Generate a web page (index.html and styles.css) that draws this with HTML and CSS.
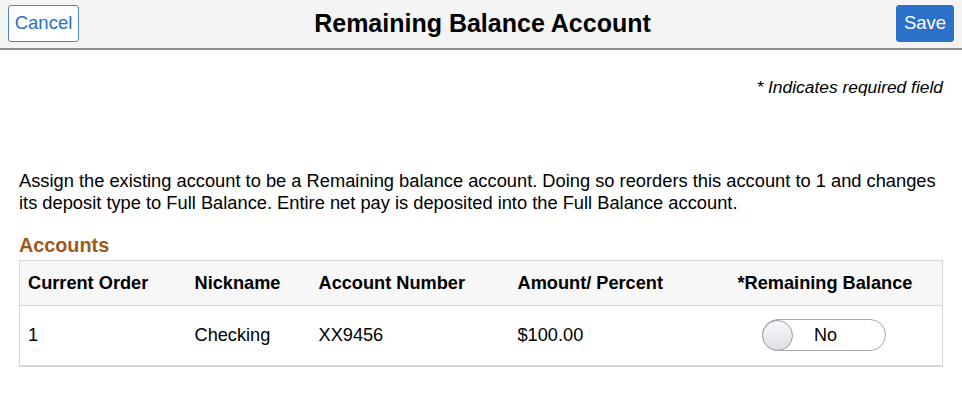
FILE: index.html
```html
<!DOCTYPE html>
<html lang="en">
<head>
<meta charset="utf-8">
<title>Remaining Balance Account</title>
<link rel="stylesheet" href="styles.css">
</head>
<body>
<header class="topbar">
  <button class="btn btn-cancel">Cancel</button>
  <h1 class="title">Remaining Balance Account</h1>
  <button class="btn btn-save">Save</button>
</header>
<main class="content">
  <p class="required">* Indicates required field</p>
  <p class="intro">Assign the existing account to be a Remaining balance account. Doing so reorders this account to 1 and changes its deposit type to Full Balance. Entire net pay is deposited into the Full Balance account.</p>
  <h2 class="section">Accounts</h2>
  <table class="grid">
    <colgroup>
      <col class="c1"><col class="c2"><col class="c3"><col class="c4"><col class="c5">
    </colgroup>
    <thead>
      <tr>
        <th>Current Order</th>
        <th>Nickname</th>
        <th>Account Number</th>
        <th>Amount/ Percent</th>
        <th>*Remaining Balance</th>
      </tr>
    </thead>
    <tbody>
      <tr>
        <td>1</td>
        <td>Checking</td>
        <td>XX9456</td>
        <td>$100.00</td>
        <td><span class="toggle"><span class="knob"></span><span class="toggle-label">No</span></span></td>
      </tr>
    </tbody>
  </table>
</main>
</body>
</html>
```
FILE: styles.css
```css
* { box-sizing: border-box; }
html, body { margin: 0; padding: 0; background: #fff; }
body { font-family: "Liberation Sans", Arial, sans-serif; color: #000; }

.topbar {
  height: 50px;
  background: #f4f4f4;
  border-bottom: 2px solid #8e8f92;
  display: flex;
  align-items: center;
  justify-content: space-between;
  padding: 0 8px 2px 8px;
}
.btn {
  font-family: "Liberation Sans", Arial, sans-serif;
  font-size: 18.5px;
  height: 37px;
  border-radius: 3px;
  padding: 0;
  cursor: pointer;
}
.btn-cancel {
  background: #fff;
  color: #2a6fc9;
  border: 1px solid #4a84d0;
  width: 71px;
}
.btn-save {
  background: #2b70c9;
  color: #fff;
  border: 1px solid #2b70c9;
  width: 58px;
}
.title {
  margin: 0;
  font-size: 25px;
  font-weight: bold;
  flex: 1;
  text-align: center;
  padding-right: 10px;
}

.content { padding: 0 19px; }
.required {
  margin: 27px 0 0 0;
  text-align: right;
  font-style: italic;
  font-size: 17.4px;
  line-height: 20px;
}
.intro {
  margin: 73px 0 0 0;
  font-size: 18.3px;
  line-height: 22px;
}
.section {
  margin: 20px 0 0 0;
  font-size: 19.8px;
  line-height: 22px;
  color: #9c591b;
  font-weight: bold;
}
.grid {
  margin-top: 4px;
  width: 100%;
  border-collapse: collapse;
  table-layout: fixed;
  border: 1px solid #d3d6da;
  border-bottom: 2px solid #d3d6da;
  font-size: 18.2px;
}
.c1 { width: 167px; }
.c2 { width: 124px; }
.c3 { width: 199px; }
.c4 { width: 220px; }
.grid th {
  background: #f7f7f7;
  text-align: left;
  font-weight: bold;
  height: 45px;
  padding: 0 8px;
  border-bottom: 1px solid #d3d6da;
}
.grid td {
  height: 60px;
  padding: 0 8px;
}
.toggle {
  display: inline-flex;
  align-items: center;
  width: 124px;
  height: 32px;
  margin-left: 24px;
  border: 1px solid #a6a9ad;
  border-radius: 16px;
  background: #fff;
  vertical-align: middle;
}
.knob {
  width: 31px;
  height: 31px;
  border-radius: 50%;
  border: 1px solid #9a9ca0;
  background: linear-gradient(#f7f8fa, #dcdfe4);
  margin-left: -1px;
  flex: none;
}
.toggle-label {
  flex: 1;
  text-align: center;
  font-size: 18px;
  padding-right: 26px;
}
```
